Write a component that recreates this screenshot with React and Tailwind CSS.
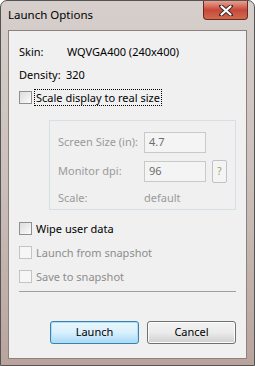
import React from "react";

function CheckBox({ label, disabled, focused }) {
  return (
    <div className="flex h-[16px] items-center">
      <div
        className={
          "h-[13px] w-[13px] border " +
          (disabled
            ? "border-[#c4c4c4] bg-[#f6f6f6]"
            : "border-[#8e8f8f] bg-gradient-to-br from-[#dcdcdc] to-[#fbfbfb]")
        }
      />
      <span
        className={
          "ml-[3px] whitespace-nowrap px-[1px] leading-[15px] " +
          (focused ? "outline outline-1 outline-dotted outline-black " : "") +
          (disabled ? "text-[#8d8d8d]" : "text-black")
        }
      >
        {label}
      </span>
    </div>
  );
}

export default function App() {
  return (
    <div
      className="relative flex h-[366px] w-[255px] flex-col overflow-hidden rounded-t-[7px] border border-[#545454] bg-gradient-to-b from-[#d6cfcc] via-[#cbbfba] to-[#b9a49d] text-[11px]"
      style={{ fontFamily: '"Noto Sans", "Open Sans", sans-serif' }}
    >
      {/* Title bar */}
      <div className="flex h-[29px] shrink-0 items-start">
        <span className="ml-[7px] mt-[6px] whitespace-nowrap text-[11.5px] leading-[16px] text-black">Launch Options</span>
        <div className="ml-auto mr-[6px] flex h-[19px] w-[45px] items-center justify-center rounded-b-[4px] border border-t-0 border-[#6a2a22] bg-gradient-to-b from-[#e6a08f] via-[#c7473a] to-[#d06b4c]">
          <svg width="14" height="11" viewBox="0 0 14 11">
            <path d="M2 1 L12 10 M12 1 L2 10" stroke="#3b2a28" strokeWidth="4" strokeLinecap="round" />
            <path d="M2.5 1.5 L11.5 9.5 M11.5 1.5 L2.5 9.5" stroke="#ffffff" strokeWidth="2.2" strokeLinecap="round" />
          </svg>
        </div>
      </div>

      {/* Client area */}
      <div className="mx-[7px] mb-[6px] flex flex-1 flex-col border border-[#8c817d] bg-[#f0f0f0] px-[10px] pt-[13px]">
        <div className="flex h-[16px] items-center whitespace-nowrap leading-[16px] text-black">
          <span className="w-[48px]">Skin:</span>
          <span>WQVGA400 (240x400)</span>
        </div>
        <div className="mt-[7px] flex h-[16px] items-center whitespace-nowrap leading-[16px] text-black">
          <span className="w-[47px]">Density:</span>
          <span>320</span>
        </div>
        <div className="mt-[6px]">
          <CheckBox label="Scale display to real size" focused />
        </div>

        {/* Disabled group */}
        <div className="ml-[30px] mt-[15px] w-[187px] border border-[#d5dfe5] px-[8px] pb-[3px] pt-[11px] text-[#9a9a9a]">
          <div className="flex items-center whitespace-nowrap">
            <span className="w-[86px]">Screen Size (in):</span>
            <div className="flex h-[21px] w-[62px] items-center border border-[#c9c9c9] bg-[#f4f4f4] px-[4px] text-[#6d6d6d]">4.7</div>
          </div>
          <div className="mt-[7px] flex items-center whitespace-nowrap">
            <span className="w-[86px]">Monitor dpi:</span>
            <div className="flex h-[21px] w-[62px] items-center border border-[#c9c9c9] bg-[#f4f4f4] px-[4px] text-[#6d6d6d]">96</div>
            <div className="ml-[6px] flex h-[23px] w-[15px] items-center justify-center rounded-[2px] border border-[#c2c2c2] bg-[#f4f4f4] text-[10px] text-[#a59a6a]">?</div>
          </div>
          <div className="mt-[7px] flex h-[16px] items-center whitespace-nowrap leading-[16px]">
            <span className="w-[86px]">Scale:</span>
            <span>default</span>
          </div>
        </div>

        <div className="mt-[10px] flex flex-col gap-[8px]">
          <CheckBox label="Wipe user data" />
          <CheckBox label="Launch from snapshot" disabled />
          <CheckBox label="Save to snapshot" disabled />
        </div>

        <div className="mt-[7px] h-[2px] border-t border-[#a0a0a0] border-b-white" />

        <div className="mt-[28px] flex justify-end gap-[8px]">
          <button className="h-[23px] w-[89px] rounded-[3px] border border-[#3c7fb1] bg-gradient-to-b from-[#eaf6fd] via-[#d9f0fc] to-[#a7d9f5] text-[11px] text-black shadow-[inset_0_0_0_1px_#a9e0f8]">
            Launch
          </button>
          <button className="h-[23px] w-[89px] rounded-[3px] border border-[#707070] bg-gradient-to-b from-[#f2f2f2] via-[#ebebeb] to-[#cfcfcf] text-[11px] text-black shadow-[inset_0_0_0_1px_#fcfcfc]">
            Cancel
          </button>
        </div>
      </div>
    </div>
  );
}
